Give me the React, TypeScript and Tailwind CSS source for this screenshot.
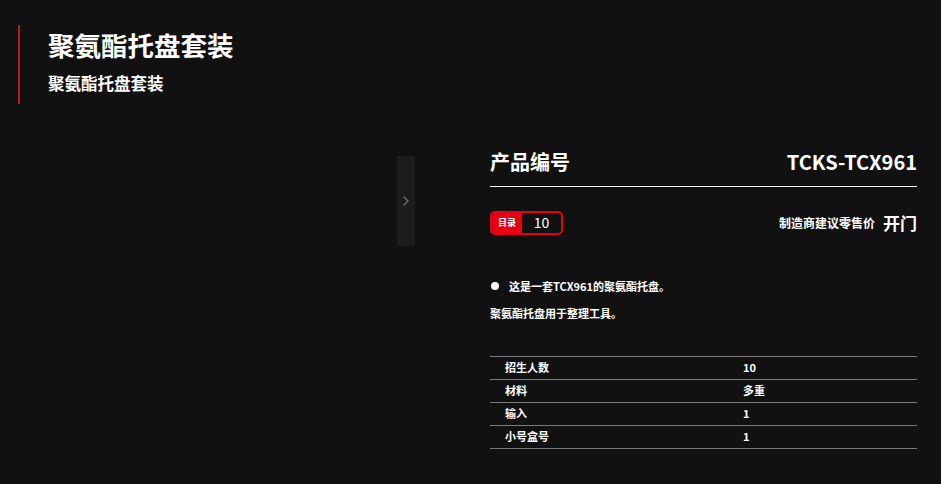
import { ChevronRight } from 'lucide-react'

const font = { fontFamily: '"Noto Sans CJK SC", "Noto Sans", sans-serif' }

const specs = [
  ['招生人数', '10'],
  ['材料', '多重'],
  ['输入', '1'],
  ['小号盒号', '1'],
]

export default function App() {
  return (
    <div style={font} className="w-[941px] h-[484px] bg-[#111111] text-white overflow-hidden">
      <div className="pt-[25px] pl-[18px]">
        <div className="border-l-2 border-[#c4161c] pl-[28px] h-[79px] pt-[3px]">
          <h1 className="text-[26.5px] leading-[34px] font-bold">聚氨酯托盘套装</h1>
          <p className="text-[16.5px] leading-[24px] font-bold mt-[9px]">聚氨酯托盘套装</p>
        </div>
      </div>

      <div className="flex mt-[52px]">
        <div className="w-[415px] flex justify-end">
          <button className="w-[18px] h-[90px] bg-[#1c1c1c] flex items-center justify-center text-[#6e6e6e]">
            <ChevronRight size={16} strokeWidth={2} />
          </button>
        </div>

        <div className="ml-[75px] w-[427px]">
          <div className="flex justify-between items-start border-b border-white h-[35px] -mt-[4px] leading-[20px]">
            <span className="text-[20px] font-bold">产品编号</span>
            <span className="text-[20px] font-bold">TCKS-TCX961</span>
          </div>

          <div className="flex justify-between items-center mt-[23px]">
            <div className="flex h-[24px] w-[73px] rounded-[5px] border-2 border-[#e60012] overflow-hidden">
              <span className="bg-[#e60012] w-[30px] flex items-center justify-center text-[9px] font-bold">目录</span>
              <span className="flex-1 flex items-center justify-center text-[14px] font-normal">10</span>
            </div>
            <div className="flex items-center gap-[8px]">
              <span className="text-[12px] font-bold">制造商建议零售价</span>
              <span className="text-[17px] font-bold">开门</span>
            </div>
          </div>

          <div className="mt-[38px] flex items-center text-[11px] font-bold leading-[24px]">
            <span className="w-[8px] h-[8px] rounded-full bg-white ml-[1px] mr-[10px]"></span>
            <span>这是一套TCX961的聚氨酯托盘。</span>
          </div>
          <p className="text-[11px] font-bold leading-[24px] mt-[3px]">聚氨酯托盘用于整理工具。</p>

          <table className="w-full mt-[31px] text-[11px] font-bold border-collapse">
            <tbody>
              {specs.map(([k, v]) => (
                <tr key={k} className="border-t border-b border-[#7a7a7a] h-[23px]">
                  <td className="pl-[15px] w-[253px]">{k}</td>
                  <td>{v}</td>
                </tr>
              ))}
            </tbody>
          </table>
        </div>
      </div>
    </div>
  )
}
